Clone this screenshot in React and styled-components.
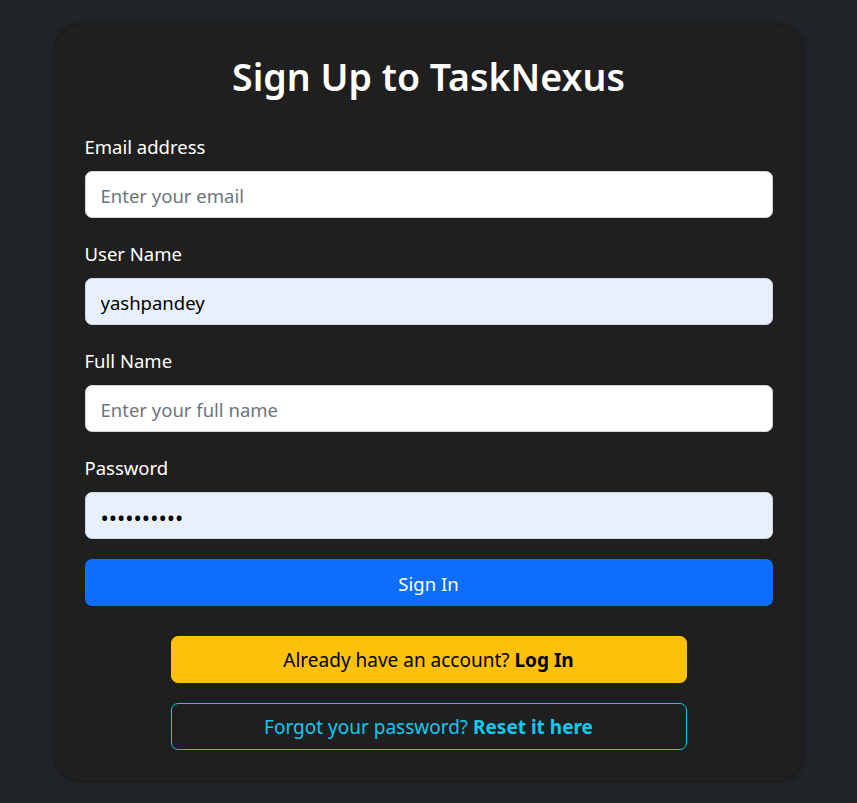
import React from 'react';
import styled, { createGlobalStyle } from 'styled-components';

const GlobalStyle = createGlobalStyle`
    * { box-sizing: border-box; }
    body {
        margin: 0;
        background-color: #212529;
        font-family: "Noto Sans", "Open Sans", sans-serif;
        color: #ffffff;
    }
`;

const fields = [
    { id: 'email', label: 'Email address', type: 'email', placeholder: 'Enter your email' },
    { id: 'username', label: 'User Name', type: 'text', value: 'yashpandey' },
    { id: 'fullname', label: 'Full Name', type: 'text', placeholder: 'Enter your full name' },
    { id: 'password', label: 'Password', type: 'password', value: 'yashpandey' },
];

const App = () => {
    return (
        <>
            <GlobalStyle />
            <Page>
                <Card>
                    <Title>Sign Up to TaskNexus</Title>
                    <Form onSubmit={(e) => e.preventDefault()}>
                        {fields.map((f) => (
                            <Group key={f.id}>
                                <Label htmlFor={f.id}>{f.label}</Label>
                                <Input
                                    id={f.id}
                                    type={f.type}
                                    placeholder={f.placeholder}
                                    defaultValue={f.value}
                                    $filled={!!f.value}
                                    readOnly
                                />
                            </Group>
                        ))}
                        <PrimaryButton type="submit">Sign In</PrimaryButton>
                    </Form>
                    <Links>
                        <LinkButton $variant="warning">
                            Already have an account? <b>Log In</b>
                        </LinkButton>
                        <LinkButton $variant="info">
                            Forgot your password? <b>Reset it here</b>
                        </LinkButton>
                    </Links>
                </Card>
            </Page>
        </>
    );
};

export default App;

const Page = styled.main`
    padding: 24px 0;
    display: flex;
    justify-content: center;
`;

const Card = styled.section`
    width: 750px;
    background-color: #1f1f1f;
    border: 1px solid #1a1a1a;
    border-radius: 26px;
    padding: 30px 30px 31px;
    box-shadow: 0 0 6px rgba(0, 0, 0, 0.25);
`;

const Title = styled.h1`
    margin: 0 0 32px;
    text-align: center;
    font-size: 37.5px;
    font-weight: 600;
    line-height: 44px;
    color: #ffffff;
`;

const Form = styled.form`
    display: flex;
    flex-direction: column;
`;

const Group = styled.div`
    display: flex;
    flex-direction: column;
    margin-bottom: 20px;
`;

const Label = styled.label`
    font-size: 18.5px;
    line-height: 31px;
    margin-bottom: 9px;
    color: #ffffff;
`;

const Input = styled.input`
    height: 47px;
    padding: 2px 15px 0;
    border: 1px solid #ced4da;
    border-radius: 7px;
    background-color: ${(p) => (p.$filled ? '#e8f0fe' : '#ffffff')};
    font-family: inherit;
    font-size: ${(p) => (p.type === 'password' ? '22px' : '18.5px')};
    color: #000000;
    outline: none;

    &::placeholder {
        color: #6c757d;
        font-size: 18.5px;
    }
`;

const PrimaryButton = styled.button`
    height: 47px;
    padding-top: 2px;
    border: none;
    border-radius: 7px;
    background-color: #0d6efd;
    color: #ffffff;
    font-family: inherit;
    font-size: 18.5px;
    cursor: pointer;
`;

const Links = styled.div`
    display: flex;
    flex-direction: column;
    align-items: center;
    gap: 20px;
    margin-top: 30px;
`;

const LinkButton = styled.a`
    display: block;
    width: 75%;
    height: 47px;
    padding-top: 2px;
    line-height: 43px;
    text-align: center;
    border-radius: 7px;
    font-size: 19px;
    cursor: pointer;
    border: 1px solid ${(p) => (p.$variant === 'warning' ? '#ffc107' : '#0dcaf0')};
    background-color: ${(p) => (p.$variant === 'warning' ? '#ffc107' : 'transparent')};
    color: ${(p) => (p.$variant === 'warning' ? '#000000' : '#0dcaf0')};

    b {
        font-weight: 700;
    }
`;
